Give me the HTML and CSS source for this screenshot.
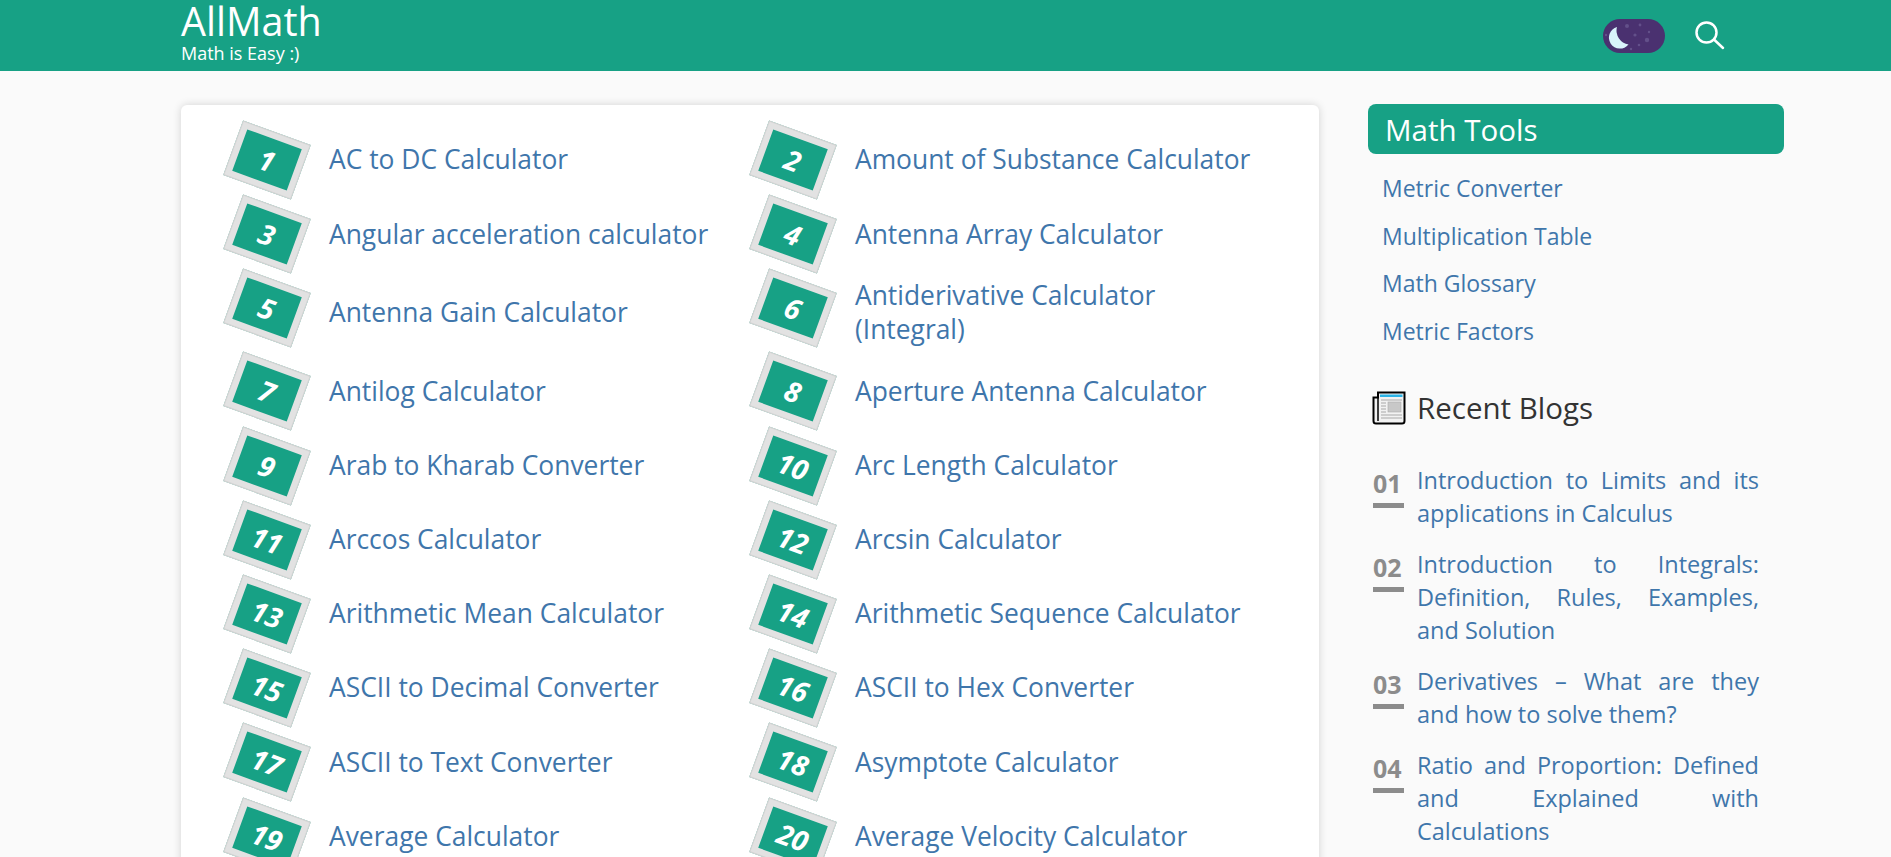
FILE: index.html
```html
<!DOCTYPE html>
<html lang="en">
<head>
<meta charset="utf-8">
<title>AllMath</title>
<link rel="stylesheet" href="styles.css">
</head>
<body>
<header class="topbar">
  <div class="brand">
    <div class="brand-name">AllMath</div>
    <div class="brand-tag">Math is Easy :)</div>
  </div>
  <div class="top-actions">
    <svg class="toggle" width="62" height="34" viewBox="0 0 62 34">
      <rect width="62" height="34" rx="17" fill="#4a3170"/>
      <g fill="#63508a">
        <circle cx="24" cy="7" r="2"/><circle cx="37" cy="6" r="1.4"/><circle cx="32" cy="16" r="1.6"/>
        <circle cx="46" cy="13" r="1.2"/><circle cx="44" cy="21" r="2.2"/><circle cx="36" cy="26" r="1.3"/>
        <circle cx="28" cy="30" r="1.2"/><circle cx="3" cy="16" r="1.2"/>
      </g>
      <path d="M14 8A11 11 0 1 0 25.500 25.500A14 14 0 0 1 14 8Z" fill="#d9f3fb"/>
    </svg>
    <svg class="search" width="32" height="32" viewBox="0 0 32 32" fill="none" stroke="#fff" stroke-width="2.500" stroke-linecap="round">
      <circle cx="12.500" cy="12.500" r="10"/>
      <path d="M20.500 20L29 28"/>
    </svg>
  </div>
</header>

<div class="page">
  <main class="card">
    <div class="tile-grid">
      <a class="tile"><span class="badge"><b>1</b></span><span class="tile-text">AC to DC Calculator</span></a>
      <a class="tile"><span class="badge"><b>2</b></span><span class="tile-text">Amount of Substance Calculator</span></a>
      <a class="tile"><span class="badge"><b>3</b></span><span class="tile-text">Angular acceleration calculator</span></a>
      <a class="tile"><span class="badge"><b>4</b></span><span class="tile-text">Antenna Array Calculator</span></a>
      <a class="tile"><span class="badge"><b>5</b></span><span class="tile-text">Antenna Gain Calculator</span></a>
      <a class="tile"><span class="badge"><b>6</b></span><span class="tile-text">Antiderivative Calculator (Integral)</span></a>
      <a class="tile"><span class="badge"><b>7</b></span><span class="tile-text">Antilog Calculator</span></a>
      <a class="tile"><span class="badge"><b>8</b></span><span class="tile-text">Aperture Antenna Calculator</span></a>
      <a class="tile"><span class="badge"><b>9</b></span><span class="tile-text">Arab to Kharab Converter</span></a>
      <a class="tile"><span class="badge"><b>10</b></span><span class="tile-text">Arc Length Calculator</span></a>
      <a class="tile"><span class="badge"><b>11</b></span><span class="tile-text">Arccos Calculator</span></a>
      <a class="tile"><span class="badge"><b>12</b></span><span class="tile-text">Arcsin Calculator</span></a>
      <a class="tile"><span class="badge"><b>13</b></span><span class="tile-text">Arithmetic Mean Calculator</span></a>
      <a class="tile"><span class="badge"><b>14</b></span><span class="tile-text">Arithmetic Sequence Calculator</span></a>
      <a class="tile"><span class="badge"><b>15</b></span><span class="tile-text">ASCII to Decimal Converter</span></a>
      <a class="tile"><span class="badge"><b>16</b></span><span class="tile-text">ASCII to Hex Converter</span></a>
      <a class="tile"><span class="badge"><b>17</b></span><span class="tile-text">ASCII to Text Converter</span></a>
      <a class="tile"><span class="badge"><b>18</b></span><span class="tile-text">Asymptote Calculator</span></a>
      <a class="tile"><span class="badge"><b>19</b></span><span class="tile-text">Average Calculator</span></a>
      <a class="tile"><span class="badge"><b>20</b></span><span class="tile-text">Average Velocity Calculator</span></a>
    </div>
  </main>

  <aside class="side">
    <h2 class="side-title">Math Tools</h2>
    <ul class="tool-list">
      <li><a>Metric Converter</a></li>
      <li><a>Multiplication Table</a></li>
      <li><a>Math Glossary</a></li>
      <li><a>Metric Factors</a></li>
    </ul>
    <div class="blog-head">
      <svg width="34" height="34" viewBox="0 0 34 34">
        <path d="M6 1.500H32.500V30A2.500 2.500 0 0 1 30 32.500H4A2.500 2.500 0 0 1 1.500 30V6.500H6Z" fill="#f2f2f2" stroke="#000" stroke-width="2"/>
        <path d="M6 6.500V30" stroke="#000" stroke-width="1.500"/>
        <rect x="8" y="3.500" width="22.500" height="2.500" fill="#2bb3e6"/>
        <rect x="16" y="11" width="13" height="10" fill="#c8c8c8" stroke="#aaa" stroke-width=".6"/>
        <path d="M9 9H30M9 12H14M9 15H14M9 18H14M9 21H14M9 24H30M9 27H30" stroke="#a8a8a8" stroke-width="1"/>
      </svg>
      <span>Recent Blogs</span>
    </div>
    <ol class="blogs">
      <li class="blog"><span class="blog-num">01</span><a class="blog-text">Introduction to Limits and its applications in Calculus</a></li>
      <li class="blog"><span class="blog-num">02</span><a class="blog-text">Introduction to Integrals: Definition, Rules, Examples, and Solution</a></li>
      <li class="blog"><span class="blog-num">03</span><a class="blog-text">Derivatives – What are they and how to solve them?</a></li>
      <li class="blog"><span class="blog-num">04</span><a class="blog-text">Ratio and Proportion: Defined and Explained with Calculations</a></li>
    </ol>
  </aside>
</div>
</body>
</html>
```
FILE: styles.css
```css
* { box-sizing: border-box; }
html, body { margin: 0; height: 857px; overflow: hidden; }
body { background: #fafafa; font-family: "Open Sans", "Noto Sans", sans-serif; color: #333; }
a { color: #3f76ab; text-decoration: none; }

.topbar {
  height: 71px;
  background: #17a185;
  padding: 0 0 0 181px;
  display: flex;
  justify-content: space-between;
  align-items: flex-start;
  color: #fff;
}
.brand-name { font-size: 39.5px; line-height: 42px; }
.brand-tag { font-size: 18px; line-height: 20px; margin-top: 1px; }
.top-actions { display: flex; align-items: center; gap: 29px; padding: 19px 165px 0 0; }
.search { margin-top: -1px; }

.page {
  display: flex;
  align-items: flex-start;
  gap: 49px;
  padding: 34px 107px 0 181px;
}
.card {
  width: 1138px;
  flex: none;
  height: 900px;
  background: #fff;
  border-radius: 6px;
  box-shadow: 0 0 8px rgba(0,0,0,.16);
  padding: 18px 0 0 36px;
}
.tile-grid {
  display: grid;
  grid-template-columns: 526px 526px;
  grid-auto-rows: minmax(74.2px, auto);
}
.tile { display: flex; align-items: center; }
.badge {
  flex: none;
  align-self: flex-start;
  width: 72px;
  height: 58px;
  margin: 8px 26px 0 14px;
  border: 7px solid #e2e2e2;
  outline: 1px solid #d2d2d2;
  outline-offset: -1px;
  background: #17a185;
  transform: rotate(20deg);
  display: flex;
  align-items: center;
  justify-content: center;
  color: #fff;
  font-size: 28px;
  font-style: italic;
}
.badge b { font-weight: 700; }
.tile-text { font-size: 26.4px; line-height: 33.5px; padding: 8px 0; max-width: 405px; }

.side { width: 416px; flex: none; }
.side-title {
  margin: -1px 0 0;
  height: 50px;
  padding-left: 17px;
  background: #17a185;
  border-radius: 8px;
  color: #fff;
  font-size: 29.5px;
  font-weight: 400;
  line-height: 51px;
}
.tool-list { list-style: none; margin: 11px 0 0; padding: 0 0 0 14px; }
.tool-list li { font-size: 23px; line-height: 47.7px; }
.blog-head { display: flex; align-items: center; gap: 11px; margin: 30px 0 0 4px; font-size: 29.5px; line-height: 44px; color: #333; }
.blogs { list-style: none; margin: 34px 0 0; padding: 0 25px 0 5px; }
.blog { display: flex; gap: 13px; margin-bottom: 18px; }
.blog-num {
  flex: none;
  width: 31px;
  height: 39px;
  margin-top: 5px;
  color: #8c8c8c;
  font-size: 25px;
  font-weight: 700;
  line-height: 28px;
  border-bottom: 5px solid #8c8c8c;
}
.blog-text { font-size: 23.5px; line-height: 33px; text-align: justify; }
```
